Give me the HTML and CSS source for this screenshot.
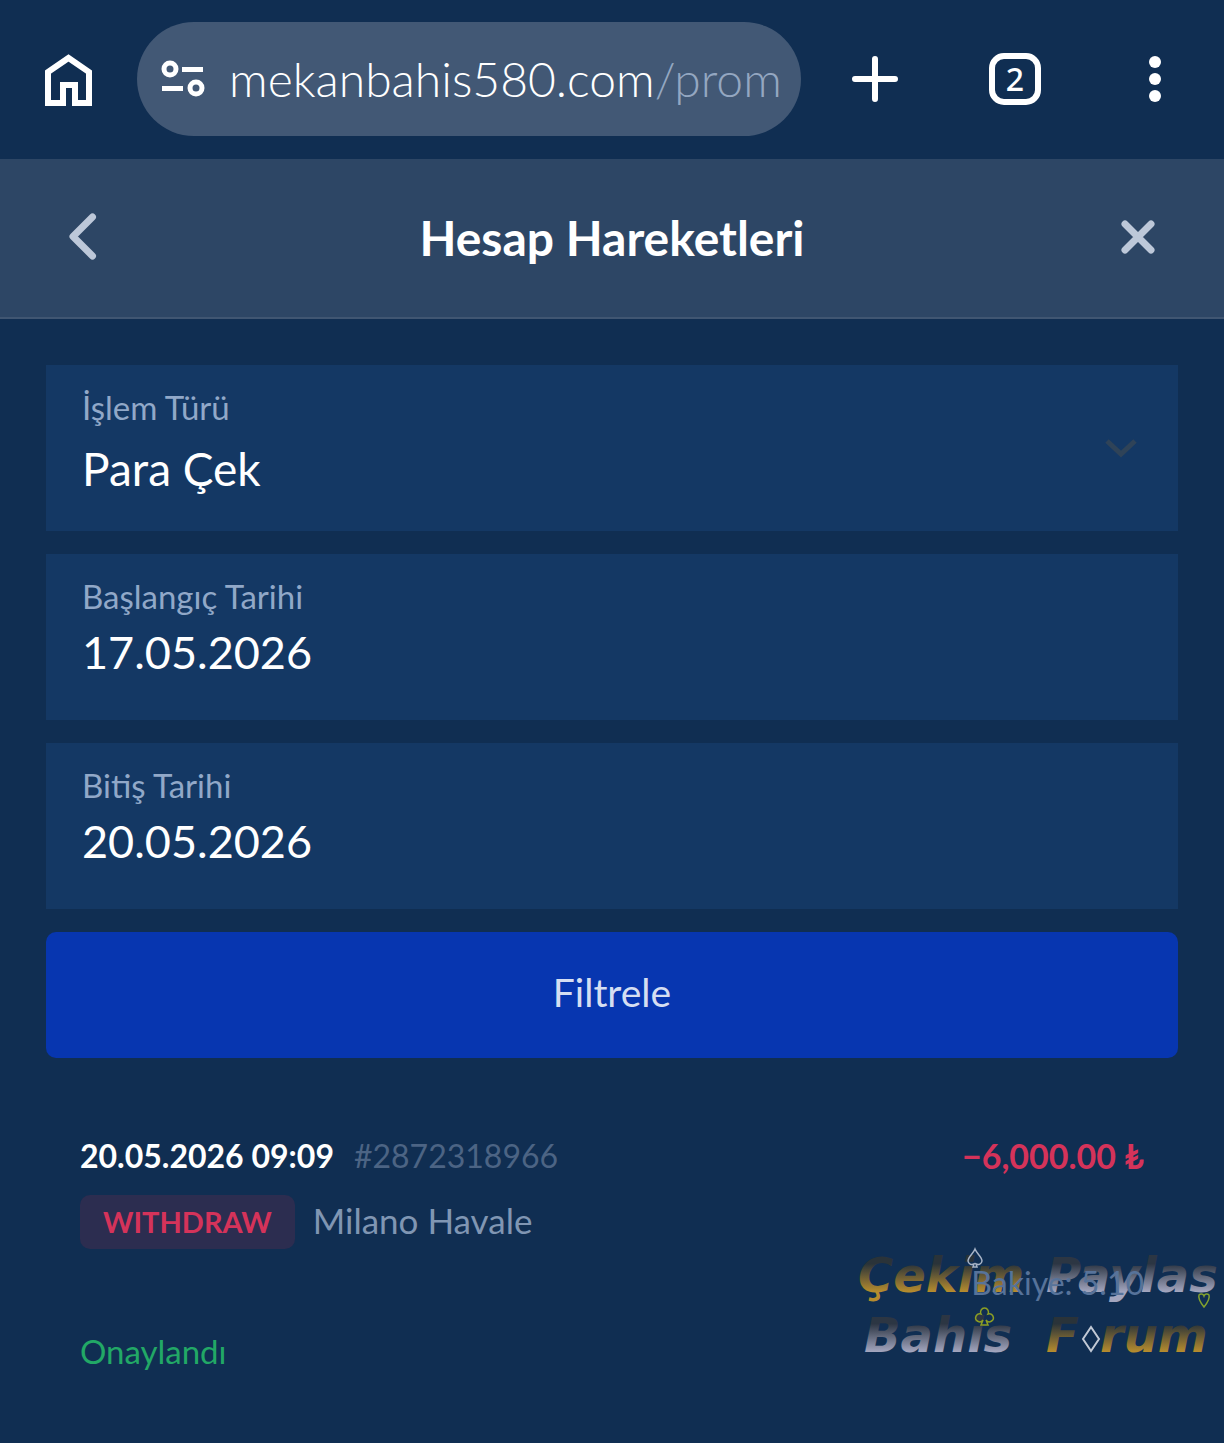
FILE: index.html
```html
<!DOCTYPE html>
<html lang="tr">
<head>
    <meta charset="UTF-8">
    <meta name="viewport" content="width=device-width, initial-scale=1.0">
    <title>Hesap Hareketleri</title>
    <link rel="stylesheet" href="styles.css">
</head>
<body>
    <div class="browser-bar">
        <button class="icon-btn" aria-label="Home">
            <svg width="52" height="56" viewBox="0 0 52 56" fill="none" stroke="#fff" stroke-width="6">
                <path d="M5 21 25.500 7 46 21V52H32V34H20V52H5z"/>
            </svg>
        </button>
        <a class="address" href="#">
            <svg width="44" height="38" viewBox="0 0 44 38" fill="none" stroke="#fff" stroke-width="5">
                <circle cx="9" cy="9" r="6"/>
                <path d="M21 9.500H42M1 28.500H22"/>
                <circle cx="35" cy="28" r="6"/>
            </svg>
            <span class="url">mekanbahis580.com<span class="path">/prom</span></span>
        </a>
        <div class="browser-actions">
            <button class="icon-btn" aria-label="New tab">
                <svg width="52" height="52" viewBox="0 0 52 52" stroke="#fff" stroke-width="6" stroke-linecap="round">
                    <path d="M26 6V46M6 26H46"/>
                </svg>
            </button>
            <button class="icon-btn tab-count" aria-label="Tabs">2</button>
            <button class="icon-btn" aria-label="Menu">
                <svg width="52" height="52" viewBox="0 0 52 52" fill="#fff">
                    <circle cx="26" cy="9" r="6"/>
                    <circle cx="26" cy="26" r="6"/>
                    <circle cx="26" cy="43" r="6"/>
                </svg>
            </button>
        </div>
    </div>

    <header class="page-header">
        <button class="icon-btn" aria-label="Geri">
            <svg width="30" height="48" viewBox="0 0 30 48" fill="none" stroke="#bdc8d9" stroke-width="7" stroke-linecap="round" stroke-linejoin="round">
                <path d="M24.500 4 5 23.500 24.500 43"/>
            </svg>
        </button>
        <h1>Hesap Hareketleri</h1>
        <button class="icon-btn close" aria-label="Kapat">
            <svg width="36" height="36" viewBox="0 0 36 36" stroke="#bdc8d9" stroke-width="7" stroke-linecap="round">
                <path d="M5 5 31 31M31 5 5 31"/>
            </svg>
        </button>
    </header>

    <main>
        <form class="filters">
            <div class="field select-field">
                <label for="type">İşlem Türü</label>
                <select id="type">
                    <option>Para Çek</option>
                </select>
                <svg class="chevron" width="32" height="20" viewBox="0 0 32 20" fill="none" stroke="#2f4358" stroke-width="5">
                    <path d="M2 2 16 15 30 2"/>
                </svg>
            </div>
            <div class="field">
                <label for="start">Başlangıç Tarihi</label>
                <input id="start" type="text" value="17.05.2026">
            </div>
            <div class="field">
                <label for="end">Bitiş Tarihi</label>
                <input id="end" type="text" value="20.05.2026">
            </div>
            <button class="submit" type="button">Filtrele</button>
        </form>

        <section class="transaction">
            <svg class="watermark" width="368" height="120" viewBox="0 0 368 120">
                <defs>
                    <linearGradient id="gold" x1="0" y1="0" x2="0" y2="1">
                        <stop offset="0.300" stop-color="#2d3437"/>
                        <stop offset="0.800" stop-color="#c9972b"/>
                    </linearGradient>
                    <linearGradient id="silver" x1="0" y1="0" x2="0" y2="1">
                        <stop offset="0.300" stop-color="#303742"/>
                        <stop offset="0.800" stop-color="#b3b3cb"/>
                    </linearGradient>
                </defs>
                <text x="2" y="46" fill="url(#gold)">Çekim</text>
                <text x="190" y="46" fill="url(#silver)">Paylas</text>
                <text x="8" y="106" fill="url(#silver)">Bahis</text>
                <text x="190" y="106" fill="url(#gold)">F</text>
                <text x="244" y="106" fill="url(#gold)">rum</text>
                <g fill="none" stroke-width="1.500">
                    <path stroke="#b9c3d4" d="M119 3C117 8 112 11 112 15a4 4 0 0 0 6 3l-1 3h4l-1-3a4 4 0 0 0 6-3C126 11 121 8 119 3z"/>
                    <path stroke="#8fae2c" d="M348 61C344 56 342 52 343 49a3 3 0 0 1 5 1 3 3 0 0 1 5-1C354 52 352 56 348 61z"/>
                    <path stroke="#9aac20" d="M127 74l-2 5h7l-2-5a4 4 0 1 0 2-6 4 4 0 1 0-7 0 4 4 0 1 0 2 6z"/>
                    <path stroke="#d5dae4" stroke-width="2" d="M235 81 243 93 235 105 227 93z"/>
                </g>
            </svg>
            <div class="row">
                <span class="date">20.05.2026 09:09</span>
                <span class="number">#2872318966</span>
                <span class="amount">−6,000.00 ₺</span>
            </div>
            <div class="row details">
                <span class="badge">WITHDRAW</span>
                <span class="method">Milano Havale</span>
            </div>
            <div class="balance">Bakiye: 5.10</div>
            <div class="status">Onaylandı</div>
        </section>
    </main>
</body>
</html>
```
FILE: styles.css
```css
* {
    box-sizing: border-box;
}

body {
    margin: 0;
    min-height: 100vh;
    background-color: #102e52;
    color: #fff;
    font-family: Lato, "Noto Sans", sans-serif;
    overflow-x: hidden;
}

button,
input,
select {
    font-family: inherit;
    color: inherit;
}

.icon-btn {
    display: flex;
    align-items: center;
    justify-content: center;
    padding: 0;
    border: none;
    background: none;
    cursor: pointer;
}

/* Browser toolbar */
.browser-bar {
    display: flex;
    align-items: center;
    gap: 42px;
    height: 159px;
    padding: 0 43px 2px;
}

.address {
    flex: 1;
    display: flex;
    align-items: center;
    gap: 24px;
    min-width: 0;
    height: 114px;
    padding: 0 0 0 24px;
    border-radius: 57px;
    background-color: #425875;
    color: #fff;
    text-decoration: none;
}

.url {
    font-size: 48px;
    font-weight: 300;
    white-space: nowrap;
}

.path {
    color: #94a7c1;
}

.browser-actions {
    display: flex;
    gap: 88px;
    padding-left: 6px;
}

.tab-count {
    width: 52px;
    height: 52px;
    border: 6px solid #fff;
    border-radius: 15px;
    font-family: "Noto Sans", sans-serif;
    font-size: 32px;
    font-weight: 500;
    line-height: 40px;
}

/* Page header */
.page-header {
    display: grid;
    grid-template-columns: 1fr auto 1fr;
    align-items: center;
    justify-items: start;
    height: 160px;
    padding: 0 68px 2px;
    border-bottom: 2px solid #405672;
    background-color: #2d4665;
}

.close {
    justify-self: end;
}

h1 {
    margin: 0;
    font-size: 48px;
    font-weight: 700;
}

/* Filters */
main {
    padding: 46px;
}

.filters {
    display: flex;
    flex-direction: column;
    gap: 23px;
}

.field {
    position: relative;
    display: flex;
    flex-direction: column;
    gap: 4px;
    height: 166px;
    padding: 21px 36px;
    background-color: #143864;
}

label {
    font-size: 33px;
    line-height: 42px;
    color: #91a8c8;
}

.field input,
.field select {
    width: 100%;
    height: 62px;
    padding: 0;
    border: none;
    background: none;
    appearance: none;
    font-size: 45px;
    outline: none;
}

.select-field {
    gap: 9px;
}

.field select {
    font-size: 46px;
}

.chevron {
    position: absolute;
    top: 74px;
    right: 41px;
    pointer-events: none;
}

.submit {
    height: 126px;
    padding: 0 0 6px;
    border: none;
    border-radius: 10px;
    background-color: #0736b0;
    color: #d5def2;
    font-size: 39px;
    cursor: pointer;
}

/* Transaction */
.transaction {
    position: relative;
    display: flex;
    flex-direction: column;
    padding: 70px 34px 0;
}

.row {
    display: flex;
    align-items: center;
    gap: 20px;
    min-height: 54px;
}

.details {
    gap: 18px;
    margin-top: 13px;
}

.date {
    font-size: 32px;
    font-weight: 700;
}

.number {
    font-size: 32px;
    color: #4c6484;
}

.amount {
    margin-left: auto;
    font-size: 34px;
    font-weight: 700;
    color: #d5335a;
}

.badge {
    padding: 0 23px;
    border-radius: 10px;
    background-color: #2c2d50;
    color: #d5335a;
    font-size: 29px;
    font-weight: 700;
    line-height: 54px;
}

.method {
    font-size: 35px;
    line-height: 50px;
    padding-bottom: 4px;
    color: #8096b3;
}

.balance {
    position: relative;
    margin-top: 12px;
    align-self: flex-end;
    font-size: 32px;
    line-height: 44px;
    color: #57739a;
}

.status {
    margin-top: 24px;
    font-size: 33px;
    line-height: 44px;
    color: #22a866;
}

/* Forum mark, lies behind the balance */
.watermark {
    position: absolute;
    top: 188px;
    right: -46px;
    font-family: "DejaVu Sans", sans-serif;
    font-size: 48px;
    font-style: italic;
    font-weight: 700;
    opacity: 0.9;
}
```
